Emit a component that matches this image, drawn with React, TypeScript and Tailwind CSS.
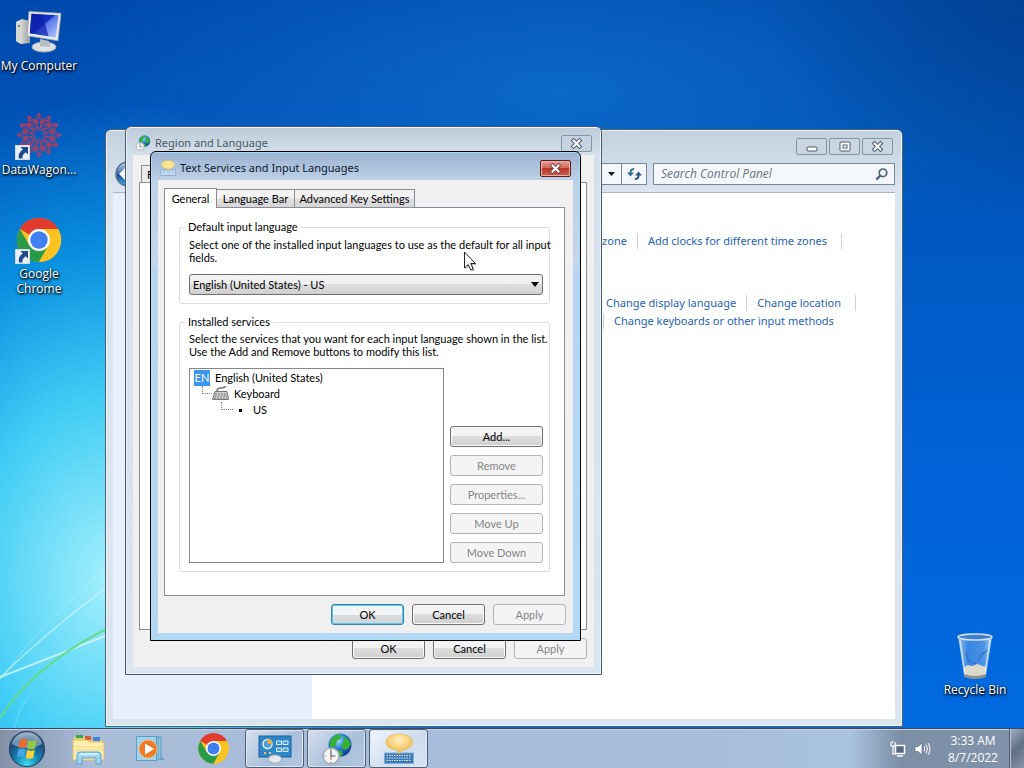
import type { ReactNode } from 'react';

const SEGOE = 'font-["Noto_Sans","Open_Sans",sans-serif]';
const SEGOE_LABEL = 'font-["Open_Sans","Noto_Sans",sans-serif]';

function CloseGlyph({ stroke }: { stroke: string }) {
  return (
    <svg width="13" height="11" viewBox="0 0 13 11" aria-hidden="true">
      <path d="M3.500 2.500l6 6M9.500 2.500l-6 6" stroke={stroke} strokeWidth="4" strokeLinecap="square" />
      <path d="M3.500 2.500l6 6M9.500 2.500l-6 6" stroke="#fff" strokeWidth="2" strokeLinecap="square" />
    </svg>
  );
}

function ChromeLogo({ size }: { size: number }) {
  return (
    <svg width={size} height={size} viewBox="0 0 48 48" aria-hidden="true">
      <circle cx="24" cy="24" r="22" fill="#fbc31f" />
      <path d="M4.900 13A22 22 0 0 1 43.100 13H24z" fill="#e33b2e" />
      <path d="M24 24L4.900 13A22 22 0 0 1 43.100 13z" fill="#e33b2e" />
      <path d="M4.900 13A22 22 0 0 0 24 46l9.500-16.500L24 24 14.500 29.500z" fill="#2a9a48" />
      <path d="M24 46A22 22 0 0 0 43.100 13H24L33.500 29.500z" fill="#fbc31f" />
      <circle cx="24" cy="24" r="11" fill="#fff" />
      <circle cx="24" cy="24" r="8.700" fill="#3f7ff0" />
    </svg>
  );
}

function ShortcutArrow() {
  return (
    <svg className="absolute bottom-0 left-0" width="15" height="15" viewBox="0 0 15 15" aria-hidden="true">
      <rect width="15" height="15" fill="#e9eff5" stroke="#b9c6d6" />
      <path d="M5.500 2H13v7.500l-2.300-2.300C8 9 7 11 7.500 13.500H4C3 9.500 4.600 6.800 7.800 4.400z" fill="#1c4a8c" />
    </svg>
  );
}

function ComputerIcon() {
  return (
    <svg width="48" height="48" viewBox="0 0 48 48" aria-hidden="true">
      <defs>
        <linearGradient id="screen" x1="0" y1="0" x2="1" y2="1">
          <stop offset="0" stopColor="#0a1a9c" />
          <stop offset=".45" stopColor="#1730c8" />
          <stop offset=".5" stopColor="#5a78ea" />
          <stop offset="1" stopColor="#b8ccff" />
        </linearGradient>
        <linearGradient id="case" x1="0" x2="1">
          <stop offset="0" stopColor="#f4f4ee" />
          <stop offset="1" stopColor="#9a9f9f" />
        </linearGradient>
      </defs>
      <path d="M1 14l6-3 8 2v22l-9 1-5-3z" fill="url(#case)" />
      <path d="M1 14l5 2v20l-5-3z" fill="#d5d7d0" />
      <circle cx="4" cy="18" r="1" fill="#5a6670" />
      <ellipse cx="29" cy="39" rx="12" ry="5" fill="#dfe2e2" stroke="#aab0b4" />
      <path d="M25 31l9 2 1 6-10-1z" fill="#b8bec2" />
      <path d="M14 3.500l32 1.800-3 27.500-31-5z" fill="#e8eaea" stroke="#9ba3ab" strokeWidth=".8" />
      <path d="M16.500 5.800l27 1.500-2.700 22.200-26-4.200z" fill="url(#screen)" />
      <path d="M16.500 5.800l11 .6 6 21.800-18.700-3z" fill="#0c1fa8" opacity=".7" />
    </svg>
  );
}

function WagonIcon() {
  const turns = [0, 30, 60, 90, 120, 150, 180, 210, 240, 270, 300, 330];
  return (
    <svg width="48" height="48" viewBox="0 0 48 48" aria-hidden="true" fill="none" stroke="#b83c5c" strokeWidth=".9">
      <circle cx="24" cy="23" r="5" />
      {turns.map((t) => (
        <g key={t} transform={`rotate(${t} 24 23)`}>
          <path d="M24 17l5-5-5-7-5 7zM18 12l6-11 6 11M24 5V1M22 3h4" />
          <circle cx="24" cy="12" r="4" strokeWidth=".5" />
        </g>
      ))}
    </svg>
  );
}

function BinIcon() {
  return (
    <svg width="48" height="48" viewBox="0 0 48 48" aria-hidden="true">
      <defs>
        <linearGradient id="glass" x1="0" x2="1">
          <stop offset="0" stopColor="#b9d8f7" stopOpacity=".9" />
          <stop offset=".3" stopColor="#5e9ae4" stopOpacity=".6" />
          <stop offset=".75" stopColor="#79aeea" stopOpacity=".6" />
          <stop offset="1" stopColor="#cfe4f8" stopOpacity=".9" />
        </linearGradient>
      </defs>
      <path d="M7 4h34l-6 40q-11 4-22 0z" fill="url(#glass)" />
      <path d="M12.500 36l4-3 5 1 5-2 5 2 4 1-1 9q-11 4-21 0z" fill="#dcd8cc" />
      <path d="M13 42q11 4 22 0v3q-11 4-22 0z" fill="#8c9294" />
      <path d="M15 20l2 8 4 3M27 29l3-6 7-5M22 32l4-2" stroke="#2b62bd" strokeWidth="1.300" fill="none" opacity=".7" />
      <ellipse cx="24" cy="5" rx="17" ry="3" fill="#3d7fd0" stroke="#d4e0e8" strokeWidth="1.600" />
      <path d="M9 8l5 34M39 8l-5 34" stroke="#e8f3fd" strokeWidth="1.500" opacity=".7" />
    </svg>
  );
}

function GlobeClock({ size }: { size: number }) {
  return (
    <svg width={size} height={size} viewBox="0 0 32 32" aria-hidden="true">
      <defs>
        <radialGradient id="globe" cx=".4" cy=".3" r=".8">
          <stop offset="0" stopColor="#9fe0ff" />
          <stop offset=".45" stopColor="#2a78e0" />
          <stop offset="1" stopColor="#0a2880" />
        </radialGradient>
      </defs>
      <circle cx="19" cy="12" r="11.500" fill="url(#globe)" />
      <path d="M10 6q5-5 9-5l1 4-4 3-1 5-4 2-3-3zM22 3q6 2 8 8l-3 5-5 1-2-5 3-4zM15 17l6 1 1 4-4 1.500-3-1z" fill="#35b034" />
      <circle cx="10" cy="23" r="8" fill="#f3f4f4" stroke="#a4abb0" strokeWidth="1.500" />
      <path d="M10 17.500V23h4.500M10 16v1M10 29v1M3.500 23h1" stroke="#57626c" strokeWidth="1.200" fill="none" />
      <path d="M10 23v4" stroke="#d05a4a" />
    </svg>
  );
}

function BubbleKeyboard({ size, pale }: { size: number; pale?: boolean }) {
  return (
    <svg width={size} height={size} viewBox="0 0 32 32" aria-hidden="true">
      <defs>
        <radialGradient id="bubble" cx=".5" cy=".3" r=".7">
          <stop offset="0" stopColor="#fff2c4" />
          <stop offset="1" stopColor="#efb23c" />
        </radialGradient>
      </defs>
      <rect x="1.500" y="20" width="29" height="10.500" fill={pale ? '#cfe0f2' : '#3f78b4'} stroke={pale ? '#5d8fc2' : '#7fb0dc'} />
      <path d="M3.500 22.500h25M3.500 25h25M3.500 27.500h25" stroke={pale ? '#7ea6cf' : '#d9ecfb'} strokeDasharray="1.500 1" />
      <path d="M16 1c8 0 13.500 3.500 13.500 8S25 16.500 19 17l-2.500 4L14 17C7.500 16.500 3 13.500 3 9S8 1 16 1z" fill={pale ? '#f8e48c' : 'url(#bubble)'} stroke="#dcb85a" strokeWidth=".7" />
    </svg>
  );
}

function StartOrb() {
  return (
    <svg width="38" height="38" viewBox="0 0 38 38" aria-hidden="true">
      <defs>
        <radialGradient id="orb" cx=".5" cy=".95" r=".95">
          <stop offset="0" stopColor="#3fe0f5" />
          <stop offset=".4" stopColor="#1580ae" />
          <stop offset=".75" stopColor="#1d4a78" />
          <stop offset="1" stopColor="#6f93b5" />
        </radialGradient>
      </defs>
      <circle cx="19" cy="19" r="17.500" fill="url(#orb)" stroke="#244564" strokeWidth="1.200" />
      <path d="M4 14a15.500 15.500 0 0 1 30 0q-15 8-30 0z" fill="#fff" opacity=".38" />
      <path d="M12 10q3.500-2 7.500-.3L18 18q-4-1.700-7.500.2z" fill="#ee6a2c" />
      <path d="M20.600 10.300q4 1.800 8-.2L27 18.500q-4 1.700-7.600 0z" fill="#92ca42" />
      <path d="M10.200 19.600q3.500-1.900 7.500-.3L16.300 27q-3.700-1.600-7.500.2z" fill="#45a5e8" />
      <path d="M19.100 19.800q3.800 1.800 7.600.2L25.200 28q-3.700 1.500-7.500-.3z" fill="#fbd13a" />
    </svg>
  );
}

function ExplorerIcon() {
  return (
    <svg width="34" height="32" viewBox="0 0 34 32" aria-hidden="true">
      <path d="M2 4h12l2 3h14v20H2z" fill="#e9cf76" />
      <path d="M4 2h7v3H4z" fill="#36a843" />
      <path d="M13 3h6v4h-6z" fill="#d65a34" />
      <path d="M21 4h7v4h-7z" fill="#3a86d8" />
      <path d="M1 7h14l2 2h15v18H1z" fill="#fbeeb0" stroke="#dcc068" />
      <path d="M3 14h28M3 17h28" stroke="#f1da86" />
      <path d="M5 31v-9q0-3 3-3h18q3 0 3 3v9h-5v-6H10v6z" fill="#9fd4f2" stroke="#5b9fcf" />
      <path d="M8 21h18" stroke="#e8f8ff" strokeWidth="1.500" />
    </svg>
  );
}

function PlayerIcon() {
  return (
    <svg width="32" height="28" viewBox="0 0 32 28" aria-hidden="true">
      <path d="M8 2h18v22H8z" fill="#8cc2e0" stroke="#5a9cc4" />
      <path d="M5 2h18v23H5z" fill="#b3dcf0" stroke="#5a9cc4" />
      <path d="M1.500 1.500h20v24h-20z" fill="#a3d3ea" stroke="#5a9cc4" />
      <path d="M25 25h5l-3-3z" fill="#6d9fc2" />
      <circle cx="13" cy="14" r="9" fill="#ec7a22" stroke="#f8b27a" />
      <path d="M10 8.500l9 5.500-9 5.500z" fill="#fff" />
    </svg>
  );
}

function PanelIcon() {
  return (
    <svg width="34" height="30" viewBox="0 0 34 30" aria-hidden="true">
      <rect x="1" y="2" width="32" height="21" fill="#2f86c6" stroke="#1c5f9a" />
      <circle cx="9.500" cy="10" r="4.500" fill="#4aa0dc" stroke="#dff1fd" strokeWidth="1.500" />
      <path d="M9.500 10V5a5 5 0 0 1 5 5z" fill="#f5a83a" />
      <path d="M18.500 7h5v3.500h-5zM25 7h5v3.500h-5zM18.500 14h5v3.500h-5zM25 14h5v3.500h-5z" fill="#4a9ad4" stroke="#d8eefc" />
      <path d="M6 19h2M11 19h2" stroke="#f4c565" strokeWidth="2" />
      <ellipse cx="17" cy="25" rx="6.500" ry="4" fill="#e7e9ea" stroke="#a7afb5" />
    </svg>
  );
}

function DesktopIcon({ label, shortcut, children }: { label: string; shortcut?: boolean; children: ReactNode }) {
  return (
    <button type="button" className="flex h-[104px] w-full flex-col items-center gap-0.5 pt-2 text-center text-[12px] leading-[15px] text-white [text-shadow:1px_1px_2px_#000,0_1px_3px_#000]">
      <span className="relative block size-12">
        {children}
        {shortcut && <ShortcutArrow />}
      </span>
      <span className="w-[78px]">{label}</span>
    </button>
  );
}

function DialogButton({ children, kind, className }: { children: ReactNode; kind?: 'default' | 'disabled'; className: string }) {
  const look =
    kind === 'disabled'
      ? 'border-[#b4b4b4] bg-[#f4f4f4] text-[#858585]'
      : kind === 'default'
        ? 'border-[#3583ad] bg-[linear-gradient(#f2f4f5_50%,#d9dddf_50%,#cfd4d7)] text-black shadow-[inset_0_0_0_1px_#5cc8ee]'
        : 'border-[#707070] bg-[linear-gradient(#f3f3f3_45%,#dedede_50%,#cfcfcf)] text-black shadow-[inset_0_0_0_1px_#f8f8f8]';
  return (
    <button type="button" disabled={kind === 'disabled'} className={`flex h-[21px] items-center justify-center rounded-[3px] border ${look} ${className}`}>
      {children}
    </button>
  );
}

function TitleBar({ icon, title, active }: { icon: ReactNode; title: string; active?: boolean }) {
  return (
    <header className="flex h-7 items-center gap-1 px-0.5 pt-1">
      {icon}
      <h2 className={`flex-1 text-[11px] leading-4 ${SEGOE} ${active ? 'text-[#0b1a30]' : 'text-[#4c5866]'}`}>{title}</h2>
      <button
        type="button"
        aria-label={`Close ${title}`}
        className={`flex h-[17px] w-[31px] items-center justify-center rounded-[2px] border ${
          active
            ? 'border-[#5c1a1c] bg-[linear-gradient(#e8a095,#d2695c_45%,#b8372a_50%,#c9604c)] shadow-[inset_0_0_0_1px_#e9b0a6]'
            : 'border-[#8594a6] bg-[#c6d3e0]'
        }`}
      >
        <CloseGlyph stroke={active ? '#7a4448' : '#4b5a6c'} />
      </button>
    </header>
  );
}

const TASKS = [
  { name: 'Control Panel', icon: <PanelIcon />, look: 'bg-[linear-gradient(135deg,#d4dfed,#a9bfda_60%,#b4c8e0)]' },
  { name: 'Region and Language', icon: <GlobeClock size={32} />, look: 'bg-[linear-gradient(135deg,#d4dfed,#a9bfda_60%,#b4c8e0)]' },
  { name: 'Text Services', icon: <BubbleKeyboard size={32} />, look: 'bg-[linear-gradient(135deg,#f0f5fb,#cddced_60%,#d6e3f2)]' },
];

function Wallpaper() {
  return (
    <svg className="absolute bottom-0 left-0" width="240" height="300" viewBox="0 0 240 300" aria-hidden="true" fill="none">
      <path d="M0 250Q50 200 130 142" stroke="#d5f7ff" strokeWidth="1.500" opacity=".65" />
      <path d="M0 252Q40 195 130 118" stroke="#d5f7ff" opacity=".35" />
      <path d="M0 249Q60 226 130 198" stroke="#dffaff" strokeWidth="2" opacity=".7" />
      <path d="M0 290Q38 230 130 190" stroke="#62dc8a" strokeWidth="2" />
      <path d="M14 300Q20 278 30 266" stroke="#9deaff" opacity=".5" />
    </svg>
  );
}

function ControlPanelWindow() {
  const caption = 'flex h-[17px] w-[31px] items-center justify-center rounded-[2px] border border-[#8594a6] bg-[#cad6e2]';
  const link = 'text-[#1e63b4] hover:underline';
  return (
    <section aria-label="Control Panel" className={`absolute top-[129px] bottom-px left-[105px] flex w-[798px] flex-col rounded-t-md border border-[#4b5f78] bg-[linear-gradient(#c3d1de,#dbe5ef_62px,#dbe5ef)] px-[7px] pb-[7px] text-[11px] leading-4 ${SEGOE} shadow-[inset_0_0_0_1px_#eef4fa]`}>
      <div className="flex justify-end gap-0.5 pt-2 pr-0.5">
        <button type="button" aria-label="Minimize" className={caption}>
          <svg width="12" height="11" viewBox="0 0 12 11"><rect x="1" y="6" width="10" height="4" rx="1" fill="#fff" stroke="#4b5a6c" /></svg>
        </button>
        <button type="button" aria-label="Maximize" className={caption}>
          <svg width="12" height="11" viewBox="0 0 12 11"><rect x="1" y="1" width="10" height="9" rx="1" fill="#fff" stroke="#4b5a6c" /><rect x="4" y="4" width="4" height="3" fill="#fff" stroke="#4b5a6c" /></svg>
        </button>
        <button type="button" aria-label="Close Control Panel" className={caption}><CloseGlyph stroke="#4b5a6c" /></button>
      </div>
      <div className="flex items-center gap-1.5 pt-[5px] pb-1">
        <button type="button" aria-label="Back" className="shrink-0">
          <svg width="28" height="28" viewBox="0 0 28 28">
            <defs>
              <linearGradient id="back" x1="0" y1="0" x2="0" y2="1">
                <stop offset="0" stopColor="#c9d8ea" />
                <stop offset=".45" stopColor="#4476b8" />
                <stop offset=".55" stopColor="#1a4a96" />
                <stop offset="1" stopColor="#3fb5e8" />
              </linearGradient>
            </defs>
            <circle cx="15" cy="14" r="12" fill="url(#back)" stroke="#56708f" strokeWidth="1.500" />
            <path d="M6 14l7-7v4h8v6h-8v4z" fill="#fff" />
          </svg>
        </button>
        <div className="flex h-[22px] flex-1 items-center justify-end border border-[#76879a] bg-[#f4f8fc]">
          <button type="button" aria-label="Previous locations" className="flex h-full w-5 items-center justify-center">
            <svg width="7" height="4" viewBox="0 0 7 4"><path d="M0 0h7L3.500 4z" fill="#111c30" /></svg>
          </button>
          <button type="button" aria-label="Refresh" className="flex h-full w-[25px] items-center justify-center border-l border-[#76879a]">
            <svg width="15" height="14" viewBox="0 0 15 14" fill="none">
              <path d="M7 2Q3 2 3.500 7" stroke="#2c6f8f" strokeWidth="2" /><path d="M0 5.500h7L3.500 9.500z" fill="#2c6f8f" />
              <path d="M8 12Q12 12 11.500 7.500" stroke="#2f5688" strokeWidth="2" /><path d="M8 8.500h7L11.500 4.500z" fill="#2f5688" />
            </svg>
          </button>
        </div>
        <label className="flex h-[22px] w-[242px] items-center border border-[#76879a] bg-[#f4f8fc] pr-1.5 pl-[7px]">
          <input type="search" aria-label="Search Control Panel" placeholder="Search Control Panel" className={`min-w-0 flex-1 bg-transparent text-[12px] italic outline-none placeholder:text-[#6b737c] ${SEGOE_LABEL}`} />
          <svg width="13" height="13" viewBox="0 0 13 13" fill="none" stroke="#4a6382">
            <circle cx="8" cy="4.800" r="3.800" strokeWidth="1.700" /><path d="M5.300 7.500L1.300 11.700" strokeWidth="2.400" />
          </svg>
        </label>
      </div>
      <div className="flex min-h-0 flex-1 border-t border-[#a9b7c6] bg-white">
        <aside className="w-[199px] bg-[#e7f1fd]" />
        <div className="flex flex-1 flex-col">
          <nav aria-label="Date and Time" className="mt-10 flex w-[530px] items-center justify-end">
            <a href="#zone" className={link}>Change the time zone</a>
            <a href="#clocks" className={`${link} ml-2.5 border-x border-[#ccd3da] pr-3.5 pl-2.5`}>Add clocks for different time zones</a>
          </nav>
          <nav aria-label="Region and Language" className="mt-[46px] flex w-[544px] items-center justify-end">
            <a href="#display" className={link}>Change display language</a>
            <a href="#location" className={`${link} ml-2.5 border-x border-[#ccd3da] pr-3.5 pl-2.5`}>Change location</a>
          </nav>
          <a href="#keyboards" className={`${link} mt-0.5 ml-[291px] self-start border-l border-[#ccd3da] pl-2.5`}>Change keyboards or other input methods</a>
        </div>
      </div>
    </section>
  );
}

function RegionDialog() {
  return (
    <section aria-label="Region and Language" className="absolute top-[126px] left-[125px] w-[477px] rounded-t-md border border-[#46566c] bg-[linear-gradient(#bccbd9,#d5e0ea_28px,#dae5f0)] px-[7px] pb-[7px] shadow-[inset_0_0_0_1px_#eef4fa]">
      <TitleBar icon={<GlobeClock size={16} />} title="Region and Language" />
      <div className="bg-[#f0f0f0] pt-2.5 pr-[7px] pb-2 pl-1.5">
        <button type="button" className="ml-0.5 flex h-[17px] w-14 items-center border border-b-0 border-[#8a8c90] bg-[#ececec] pl-[5px]">Formats</button>
        <div className="h-[448px] border border-[#898c95] bg-white" />
        <div className="flex justify-end gap-2 pt-2">
          <DialogButton className="w-[73px]">OK</DialogButton>
          <DialogButton className="w-[73px]">Cancel</DialogButton>
          <DialogButton kind="disabled" className="w-[73px]">Apply</DialogButton>
        </div>
      </div>
    </section>
  );
}

function TextServicesDialog() {
  const tab = 'h-[18px] border border-[#8a8c90] border-b-0 bg-[linear-gradient(#f2f2f2_45%,#dfdfdf_55%,#d6d6d6)]';
  return (
    <section aria-label="Text Services and Input Languages" className="absolute top-[151px] left-[150px] w-[431px] rounded-t-md border border-black bg-[linear-gradient(#9bb2d0,#bdd0e7_28px,#c6d5e9_110px,#b9d4ef_120px,#b4d8f3)] px-[7px] pb-[7px] shadow-[inset_0_0_0_1px_#a9dcf8]">
      <TitleBar active icon={<BubbleKeyboard size={16} pale />} title="Text Services and Input Languages" />
      <div className="bg-[#f0f0f0] pt-2 pb-2">
        <div role="tablist" className="relative -mb-px ml-1.5 flex items-end whitespace-nowrap">
          <button type="button" role="tab" aria-selected="true" className="h-5 w-[53px] border border-b-0 border-[#8a8c90] bg-white">General</button>
          <button type="button" role="tab" aria-selected="false" className={`${tab} mb-px w-[78px] border-l-0`}>Language Bar</button>
          <button type="button" role="tab" aria-selected="false" className={`${tab} mb-px w-[120px] border-l-0`}>Advanced Key Settings</button>
        </div>
        <div role="tabpanel" className="mr-2 ml-1.5 border border-[#898c95] bg-white px-3.5 pt-3 pb-[23px]">
          <fieldset className="min-w-0 rounded-[3px] border border-[#dcdcdc] pr-1.5 pb-2 pl-[9px]">
            <legend className="-ml-1 px-[3px] leading-[14px]">Default input language</legend>
            <label htmlFor="language" className="block pt-1 whitespace-nowrap">Select one of the installed input languages to use as the default for all input<br />fields.</label>
            <div className="relative mt-2.5">
              <select id="language" className="block h-[21px] w-full appearance-none rounded-[3px] border border-[#707070] bg-[linear-gradient(#f1f1f1_45%,#dedede_50%,#d0d0d0)] px-[3px] text-black">
                <option>English (United States) - US</option>
              </select>
              <svg className="pointer-events-none absolute top-2 right-1" width="8" height="5" viewBox="0 0 8 5" aria-hidden="true"><path d="M0 0h8L4 5z" fill="#000" /></svg>
            </div>
          </fieldset>
          <fieldset className="mt-[11px] min-w-0 rounded-[3px] border border-[#dcdcdc] pr-1.5 pb-2 pl-[9px]">
            <legend className="-ml-1 px-[3px] leading-[14px]">Installed services</legend>
            <p className="pt-[3px] whitespace-nowrap">Select the services that you want for each input language shown in the list.<br />Use the Add and Remove buttons to modify this list.</p>
            <div className="mt-2.5 flex gap-1.5">
              <ul className="h-[195px] w-[255px] border border-[#828790] bg-white pt-px pl-1 leading-4">
                <li>
                  <div className="flex items-center gap-1">
                    <span className="flex size-4 items-center justify-center bg-[#3a96f0] text-white">EN</span>
                    <span className="pl-px">English (United States)</span>
                  </div>
                  <ul className="pl-2">
                    <li>
                      <div className="flex">
                        <span className="h-2 w-2.5 border-b border-l border-dotted border-[#808080]" />
                        <svg width="17" height="16" viewBox="0 0 17 16" aria-hidden="true" fill="none" stroke="#777">
                          <path d="M5 5q0-3 3-3t6-1.500" strokeWidth="1.500" />
                          <path d="M3 5.500h12l1.500 8H.5z" fill="#d2d2d2" />
                          <path d="M3 8h12M2.500 10h13M2 12h13" strokeDasharray="2 1" />
                        </svg>
                        <span className="pl-[5px]">Keyboard</span>
                      </div>
                      <div className="flex pl-[19px]">
                        <span className="h-2 w-3 border-b border-l border-dotted border-[#808080]" />
                        <span className="mt-[7px] ml-1.5 size-[3px] bg-black" />
                        <span className="pl-[11px]">US</span>
                      </div>
                    </li>
                  </ul>
                </li>
              </ul>
              <div className="flex flex-1 flex-col justify-end gap-2">
                <DialogButton className="w-full">Add...</DialogButton>
                <DialogButton kind="disabled" className="w-full">Remove</DialogButton>
                <DialogButton kind="disabled" className="w-full">Properties...</DialogButton>
                <DialogButton kind="disabled" className="w-full">Move Up</DialogButton>
                <DialogButton kind="disabled" className="w-full">Move Down</DialogButton>
              </div>
            </div>
          </fieldset>
        </div>
        <div className="flex justify-end gap-2 pt-2 pr-[7px]">
          <DialogButton kind="default" className="w-[73px]">OK</DialogButton>
          <DialogButton className="w-[73px]">Cancel</DialogButton>
          <DialogButton kind="disabled" className="w-[73px]">Apply</DialogButton>
        </div>
      </div>
    </section>
  );
}

export default function App() {
  return (
    <div className='flex min-h-screen flex-col overflow-hidden font-["Lato","Liberation_Sans",sans-serif] text-[11px] leading-[13px] text-black'>
      <main className="relative flex-1 overflow-hidden bg-[radial-gradient(ellipse_360px_480px_at_110px_580px,#a4f0fcff,#48d8f8e6_38%,#10b4f299_68%,#0090e800),radial-gradient(ellipse_260px_220px_at_100%_0%,#02408ecc,#02408e00),radial-gradient(ellipse_500px_200px_at_560px_90px,#0f72ceb3,#0f72ce00),linear-gradient(#0049ac,#0056bc_25%,#0061d4_60%,#006ae0)]">
        <Wallpaper />
        <div className={`w-[78px] ${SEGOE_LABEL}`}>
          <DesktopIcon label="My Computer"><ComputerIcon /></DesktopIcon>
          <DesktopIcon label="DataWagon..." shortcut><WagonIcon /></DesktopIcon>
          <DesktopIcon label="Google Chrome" shortcut><ChromeLogo size={48} /></DesktopIcon>
        </div>
        <div className={`absolute right-2.5 bottom-0 w-[78px] ${SEGOE_LABEL}`}>
          <DesktopIcon label="Recycle Bin"><BinIcon /></DesktopIcon>
        </div>
        <ControlPanelWindow />
        <RegionDialog />
        <TextServicesDialog />
        <svg className="pointer-events-none absolute top-[251px] left-[463px]" width="15" height="22" viewBox="0 0 15 22" aria-hidden="true">
          <path d="M2.500 2.500v16l4-3.500 2.500 5.500 3-1.200-2.500-5.300H14z" fill="#000" opacity=".25" />
          <path d="M1.500 1v16l3.700-3.500L7.800 19l2.400-1-2.500-5.500h4.800z" fill="#fff" stroke="#222" />
        </svg>
      </main>
      <footer className={`flex h-10 items-stretch border-t border-[#3c4b60] bg-[linear-gradient(90deg,#8391a8,#a9bcd8_90px,#a6bddc_70%,#a9c3e0_83%,#7c8da6_88%,#8293ac)] shadow-[inset_0_1px_0_#c5d3e4] ${SEGOE_LABEL}`}>
        <button type="button" aria-label="Start" className="flex w-[54px] items-center justify-center"><StartOrb /></button>
        <button type="button" aria-label="Windows Explorer" className="ml-1 flex w-[62px] items-center justify-center"><ExplorerIcon /></button>
        <button type="button" aria-label="Media Player" className="flex w-[62px] items-center justify-center"><PlayerIcon /></button>
        <button type="button" aria-label="Google Chrome" className="flex w-[62px] items-center justify-center"><ChromeLogo size={33} /></button>
        <div className="ml-px flex gap-[3px]">
          {TASKS.map((task) => (
            <button key={task.name} type="button" aria-label={task.name} className={`flex w-[59px] items-center justify-center rounded-[3px] border border-[#4d5f78] shadow-[inset_0_0_0_1px_#dce7f3] ${task.look}`}>
              {task.icon}
            </button>
          ))}
        </div>
        <div className="ml-auto flex items-center">
          <div className="flex items-center gap-2 pr-1.5">
            <svg width="16" height="16" viewBox="0 0 16 16" aria-label="Network" fill="none" stroke="#fff">
              <path d="M5.500 4.500h9v8h-9z" fill="#56677f" strokeWidth="1.500" /><path d="M7 15h6" strokeWidth="1.500" />
              <path d="M1 1v4h4V1M2.500 0v2M3 5v8h3" strokeWidth="1.200" />
            </svg>
            <svg width="17" height="16" viewBox="0 0 17 16" aria-label="Volume" fill="none" stroke="#fff">
              <path d="M1 5.500h3L8 2v12l-4-3.500H1z" fill="#fff" stroke="#5a6a80" strokeWidth=".7" />
              <path d="M10 5.500q1.500 2.500 0 5M12 3.500q3 4.500 0 9M14 2q4 6 0 12" />
            </svg>
          </div>
          <time className="w-[72px] text-center text-[12px] leading-[17px] text-white" dateTime="2022-08-07T03:33">3:33 AM<br />8/7/2022</time>
          <button type="button" aria-label="Show desktop" className="h-full w-[15px] border-l border-[#4d5c72] bg-[linear-gradient(135deg,#a3b0c2,#5e6f87_50%,#8796ab)] shadow-[inset_1px_0_0_#b7c3d3]" />
        </div>
      </footer>
    </div>
  );
}
